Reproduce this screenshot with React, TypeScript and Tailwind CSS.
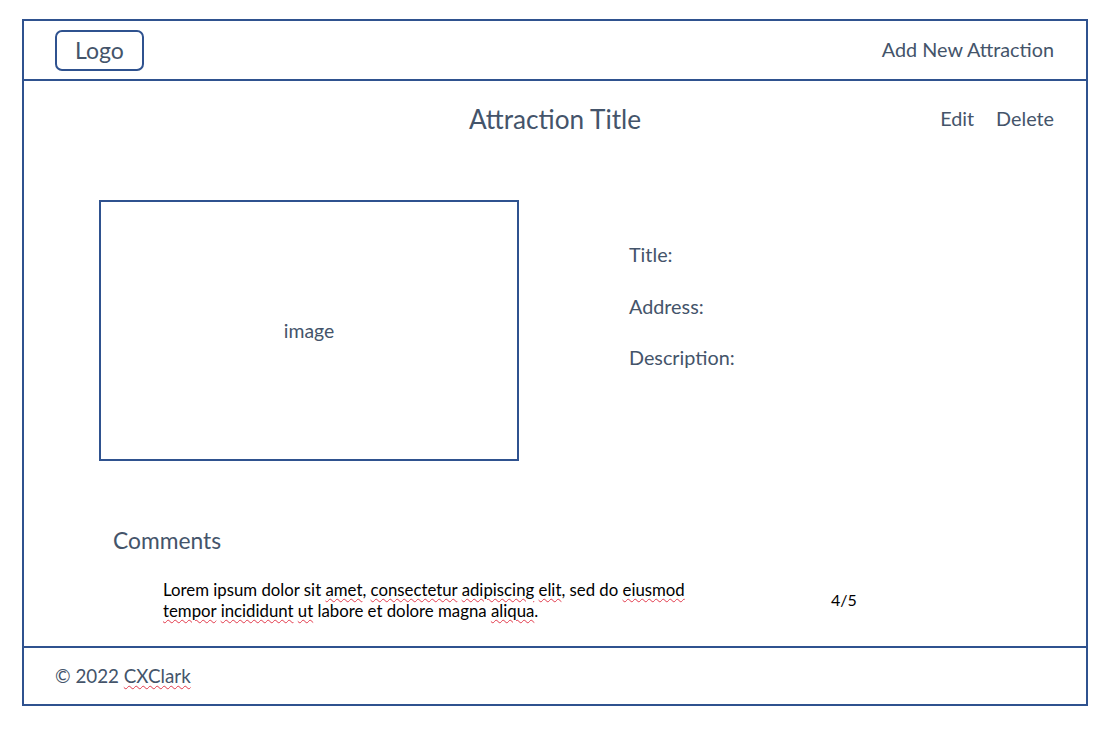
import type { ReactNode } from 'react';

const font = { fontFamily: 'Lato, "Open Sans", sans-serif' };

// red wavy line, the way a word processor marks unknown words
const Sq = ({ children }: { children: ReactNode }) => (
  <span className="underline decoration-wavy decoration-[#e23a4b] decoration-1 underline-offset-[2px]">
    {children}
  </span>
);

const Header = () => (
  <header className="flex h-[60px] shrink-0 items-center justify-between border-b-2 border-[#2f528f] pl-[31px] pr-[32px]">
    <div className="flex h-[41px] w-[89px] items-center justify-center rounded-[7px] border-2 border-[#2f528f] text-[23px] leading-none">
      Logo
    </div>
    <a className="text-[19.8px]">Add New Attraction</a>
  </header>
);

const Details = () => (
  <div className="flex flex-col gap-[27.5px] pt-[42px] text-[19.8px] leading-[24px]">
    <span>Title:</span>
    <span>Address:</span>
    <span>Description:</span>
  </div>
);

const Comments = () => (
  <section className="mt-[64px] pl-[89px]">
    <h2 className="text-[22.8px] leading-[30px]">Comments</h2>
    <div className="mt-[24px] flex items-center pl-[50px]">
      <p className="w-[668px] text-[16.8px] leading-[21px] text-black">
        Lorem ipsum dolor sit <Sq>amet</Sq>, <Sq>consectetur</Sq> <Sq>adipiscing</Sq>{' '}
        <Sq>elit</Sq>, sed do <Sq>eiusmod</Sq>
        <br />
        <Sq>tempor</Sq> <Sq>incididunt</Sq> <Sq>ut</Sq> labore et dolore magna <Sq>aliqua</Sq>.
      </p>
      <span className="text-[16px] text-black">4/5</span>
    </div>
  </section>
);

export default function App() {
  return (
    <div className="h-[733px] bg-white pl-[22px] pt-[19px] text-[#44546a]" style={font}>
      <div className="flex h-[687px] w-[1066px] flex-col border-2 border-[#2f528f]">
        <Header />
        <main className="flex-1">
          <div className="grid grid-cols-[1fr_auto_1fr] items-center px-[32px] pt-[18px]">
            <span />
            <h1 className="text-[26.2px] leading-[40px]">Attraction Title</h1>
            <div className="flex justify-end gap-[22px] text-[19.8px]">
              <a>Edit</a>
              <a>Delete</a>
            </div>
          </div>
          <div className="mt-[61px] flex gap-[110px] pl-[75px]">
            <div className="flex h-[261px] w-[420px] items-center justify-center border-2 border-[#2f528f] text-[19.4px]">
              image
            </div>
            <Details />
          </div>
          <Comments />
        </main>
        <footer className="flex h-[58px] shrink-0 items-center border-t-2 border-[#2f528f] pl-[31px] text-[18.8px]">
          <span>
            © 2022 <Sq>CXClark</Sq>
          </span>
        </footer>
      </div>
    </div>
  );
}
